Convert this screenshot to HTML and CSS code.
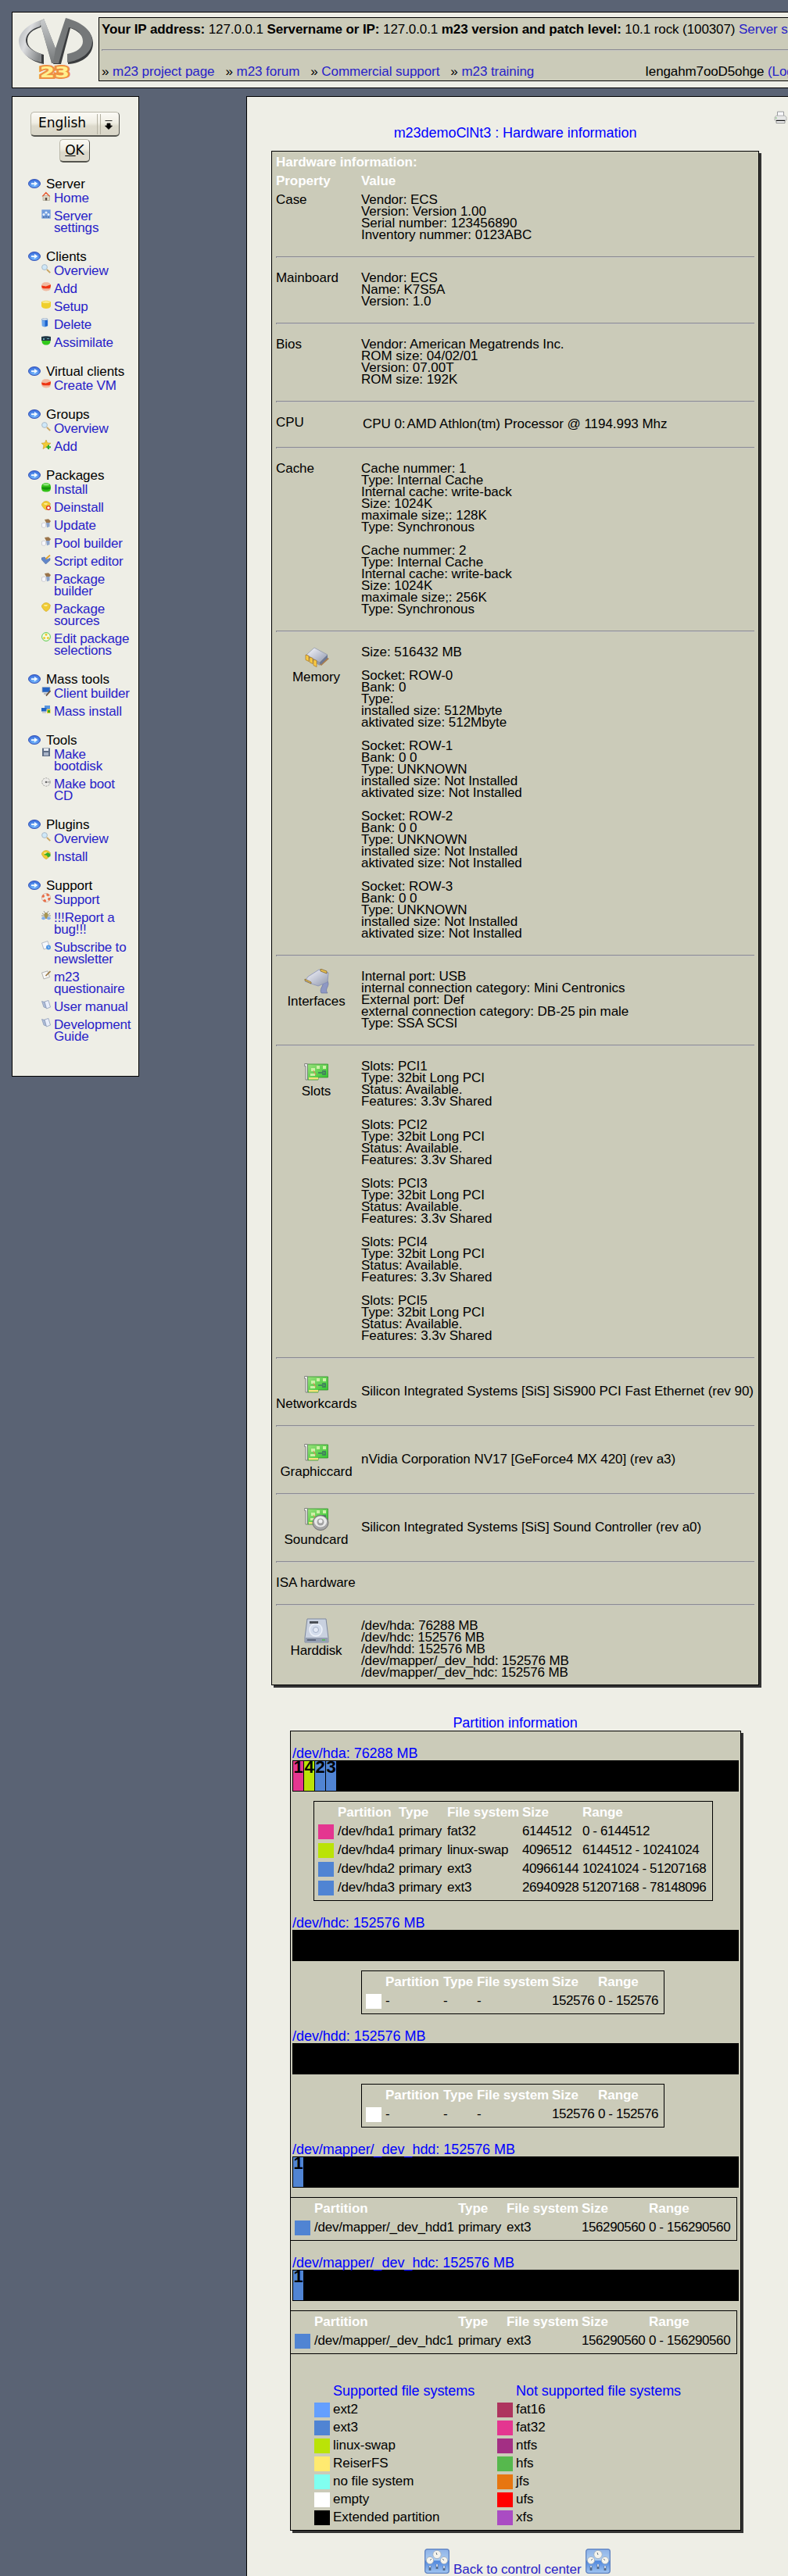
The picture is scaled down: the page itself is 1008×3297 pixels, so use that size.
FILE: index.html
```html
<!DOCTYPE html>
<html lang="en">
<head>
<meta charset="utf-8">
<title>m23 : Hardware information</title>
<link rel="stylesheet" href="styles.css">
</head>
<body>
<svg class="defs" aria-hidden="true">
  <defs>
    <linearGradient id="silver" x1="0" y1="0" x2="1" y2="0.6"><stop offset="0" stop-color="#a9adb0"/><stop offset="0.45" stop-color="#dcdddf"/><stop offset="1" stop-color="#85888a"/></linearGradient>
    <linearGradient id="steel" x1="0" y1="0" x2="0" y2="1"><stop offset="0" stop-color="#c9cccd"/><stop offset="1" stop-color="#777a7b"/></linearGradient>
    <radialGradient id="orb" cx="0.5" cy="0.7" r="0.7"><stop offset="0" stop-color="#7cc0ff"/><stop offset="1" stop-color="#3465d8"/></radialGradient>
    <linearGradient id="panel" x1="0" y1="0" x2="0" y2="1"><stop offset="0" stop-color="#8fb2e6"/><stop offset="0.45" stop-color="#a9ccf2"/><stop offset="0.5" stop-color="#4f86dc"/><stop offset="1" stop-color="#a4c8f2"/></linearGradient>
    <linearGradient id="metal" x1="0" y1="0" x2="1" y2="1"><stop offset="0" stop-color="#fafaff"/><stop offset="1" stop-color="#8f97ad"/></linearGradient>
    <linearGradient id="board" x1="0" y1="0" x2="1" y2="1"><stop offset="0" stop-color="#9ae07c"/><stop offset="1" stop-color="#2cc32a"/></linearGradient>
    <symbol id="i-arrow" viewBox="0 0 16 12"><ellipse cx="8" cy="6" rx="7.5" ry="5.5" fill="url(#orb)" stroke="#3a58b8"/><path d="M4 5.200h4V3L12.300 6 8 9V6.900H4z" fill="#f4faff"/></symbol>
    <symbol id="i-home" viewBox="0 0 12 12"><path d="M2 5.500h8.500v6H2z" fill="#ded8c6" stroke="#a09a88" stroke-width=".6"/><path d="M.5 6.200L5.800.600l5.500 5.600-1.300.4-4.200-3.800-4 3.700z" fill="#e8542a"/><path d="M4.800 8h2.400v3.500H4.800z" fill="#5c4c42"/></symbol>
    <symbol id="i-settings" viewBox="0 0 12 12"><rect x=".3" y=".3" width="11.400" height="11.400" rx="1" fill="#6f9bdc" stroke="#a8bfe4" stroke-width=".6"/><circle cx="6" cy="4" r="1.600" fill="#e6effa"/><circle cx="3" cy="6.500" r="1.500" fill="#e6effa"/><circle cx="9" cy="6.500" r="1.500" fill="#e6effa"/><path d="M3 9v2M6 8.500v2M9 9v2" stroke="#3e567e"/></symbol>
    <symbol id="i-search" viewBox="0 0 12 12"><circle cx="4" cy="4" r="3.400" fill="#cfe8f8" stroke="#a9b9c8"/><path d="M7 7l4.200 4.200" stroke="#c9a560" stroke-width="1.900"/></symbol>
    <symbol id="i-red" viewBox="0 0 12 12"><path d="M0 6C0 2 1.500.300 6 .300S12 2 12 6s-2 5.400-6 5.400S0 9.500 0 6z" fill="#f0b9a0"/><path d="M.2 4.500l5.500 1L12 3.200C12 7 11 8.200 9 8.200H3C1 8.200.2 7 .2 4.500z" fill="#ee3412"/></symbol>
    <symbol id="i-yellow" viewBox="0 0 12 12"><path d="M0 2.500C2 0 10 0 12 2.500V8c-1 4-11 4-12 0z" fill="#efcf2c"/><ellipse cx="6" cy="2.600" rx="5" ry="1.500" fill="#f9e988"/></symbol>
    <symbol id="i-bin" viewBox="0 0 12 12"><path d="M.3 1.300h7.900v8.800c-1 1.800-6.500 1.800-7.500 0z" fill="#6aa5ec"/><path d="M4.500 3h3.400v7l-3.400 1z" fill="#1f65cc"/><ellipse cx="4.200" cy="1.500" rx="3.800" ry="1.200" fill="#eaf2fb" stroke="#7e93b0" stroke-width=".6"/></symbol>
    <symbol id="i-borg" viewBox="0 0 12 12"><path d="M0 1c3-1 9-1 12 0v5H0z" fill="#213845"/><path d="M2 3h2v2H2zM7 3h3v1H7z" fill="#67aeb4"/><path d="M.5 6h11c0 4-2 5.500-5.500 5.500S.5 10 .5 6z" fill="#32c91c"/></symbol>
    <symbol id="i-star" viewBox="0 0 12 12"><path d="M6 0l1.600 3.800L12 4.200 8.800 7l1 4.600L6 9.200l-4 2.400 1-4.600L0 4.200l4.300-.4z" fill="#f3ca37" stroke="#bd8e1b" stroke-width=".5"/><path d="M8 6.500h2V8.300h2v2h-2V12H8v-1.700H6.400v-2H8z" fill="#2ba92b"/></symbol>
    <symbol id="i-green" viewBox="0 0 12 12"><path d="M0 6C0 1.500 2 .200 6 .200S12 1.500 12 6s-2 5.600-6 5.600S0 10.500 0 6z" fill="#32c118"/><path d="M.4 5.500h11.200c0 2-1 3.300-5.600 3.300S.4 7.500.4 5.500z" fill="#15930c"/><ellipse cx="6" cy="2.200" rx="4" ry="1.200" fill="#93e480"/></symbol>
    <symbol id="i-pack" viewBox="0 0 12 12"><path d="M1 3.200l2-2 3-.9 3 .9 2.400 2.200-.8 4-2 2.700L6 11.700 3.200 9.800 1.400 7.200 0 5z" fill="#f0cb35" stroke="#c99d1d" stroke-width=".5"/><path d="M3 3h5L7 5H4z" fill="#fbeb93"/></symbol>
    <symbol id="i-packout" viewBox="0 0 12 12"><use href="#i-pack"/><circle cx="9" cy="9" r="2.400" fill="#fff" stroke="#da2a1a" stroke-width="1.300"/></symbol>
    <symbol id="i-packin" viewBox="0 0 12 12"><use href="#i-pack"/><path d="M3 6l5-3 3.500 2v3L8 9.300 7 7z" fill="#36ad29"/></symbol>
    <symbol id="i-builder" viewBox="0 0 12 12"><path d="M4 1l5-.7L12 3l-1.500 2L6 5z" fill="#9a744a"/><path d="M.5 6l3-1 2 1v4l-2 1.500-3-1z" fill="#f8f8fb" stroke="#b8b8c2" stroke-width=".6"/><path d="M6 5h4.500v5L7 11.300z" fill="#8ba3ca"/></symbol>
    <symbol id="i-script" viewBox="0 0 12 12"><path d="M0 4l4-1 3 3 4-1.500V7l-5.500 5L0 6z" fill="#6287c9" stroke="#415e96" stroke-width=".5"/><path d="M5.500 5.500L11 .5" stroke="#e0a128" stroke-width="1.700"/></symbol>
    <symbol id="i-select" viewBox="0 0 12 12"><circle cx="6" cy="6" r="5.400" fill="#f5fbe4" stroke="#4bc63c" stroke-width=".9"/><circle cx="6" cy="3.300" r="1.500" fill="#edc92f"/><circle cx="3.600" cy="7.600" r="1.500" fill="#edc92f"/><circle cx="8.400" cy="7.600" r="1.500" fill="#edc92f"/></symbol>
    <symbol id="i-pc" viewBox="0 0 12 12"><path d="M1 .500h10v6.500H1z" fill="#2464c4" stroke="#a3afbf" stroke-width=".7"/><path d="M3 8h5v2H3z" fill="#b8bcc5"/><path d="M6 11.500L11.500 5" stroke="#69513c" stroke-width="1.800"/></symbol>
    <symbol id="i-mass" viewBox="0 0 12 12"><path d="M4 1h7v5H4z" fill="#5895de"/><path d="M0 4h6.500v4.500H0z" fill="#2265c5"/><path d="M1 9.500h5v1H1z" fill="#aab0bb"/><path d="M7 5.500h4.500v5.500H7z" fill="#edcb36"/><path d="M8 7h3v3H8z" fill="#35a824"/></symbol>
    <symbol id="i-floppy" viewBox="0 0 12 12"><path d="M1 .500h10v10.500H1z" fill="#5e6d85"/><path d="M3 1h6v3H3z" fill="#e7eaf0"/><path d="M3 6h6v4H3z" fill="#aab5c8"/></symbol>
    <symbol id="i-cd" viewBox="0 0 12 12"><path d="M.5 4.500C2 8 10 8 11.500 4.500L11 8c-1.500 4-8.500 4-10 0z" fill="#cfcfcc"/><circle cx="6" cy="6" r="5.200" fill="#ecebe8" stroke="#8a8a88" stroke-width=".8" stroke-dasharray="2 1.300"/><path d="M6 6l5-2v4z" fill="#b9b9b6"/><circle cx="6" cy="6" r="1.300" fill="#666"/></symbol>
    <symbol id="i-ring" viewBox="0 0 12 12"><circle cx="6" cy="6" r="4.200" fill="none" stroke="#eee9e3" stroke-width="3"/><circle cx="6" cy="6" r="4.200" fill="none" stroke="#ea6b43" stroke-width="3" stroke-dasharray="3.300 3.300"/><circle cx="6" cy="6" r="5.600" fill="none" stroke="#cf8d75" stroke-width=".5"/></symbol>
    <symbol id="i-bug" viewBox="0 0 12 12"><path d="M1 3l3 2M11 3L8 5M3 0l2 3M9 0L7 3M0 6h12" stroke="#6d6b62" stroke-width=".7"/><ellipse cx="6" cy="6" rx="2.300" ry="4" fill="#a8954f"/><ellipse cx="2.600" cy="9.300" rx="2.400" ry="2" fill="#87b0ea"/><ellipse cx="9.400" cy="9.300" rx="2.400" ry="2" fill="#87b0ea"/></symbol>
    <symbol id="i-mail" viewBox="0 0 12 12"><path d="M.5 3L8 .600l2.500 8L3 11z" fill="#f6f8fc" stroke="#98a2b3" stroke-width=".7"/><circle cx="9" cy="8.500" r="3" fill="#4f96e5"/><path d="M8 7l2 1v2z" fill="#d6eafc"/></symbol>
    <symbol id="i-note" viewBox="0 0 12 12"><path d="M.5 3L8 .800l2.500 7.700L3 11z" fill="#f7f7f6" stroke="#999" stroke-width=".7"/><path d="M5.500 7L11.500 1" stroke="#9b7843" stroke-width="1.700"/></symbol>
    <symbol id="i-book" viewBox="0 0 12 12"><path d="M.5 1.500l3.500 1L6 10 3 9z" fill="#aebdd8" stroke="#788bae" stroke-width=".6"/><path d="M4 2l5-1.500L11.500 9 6.500 11z" fill="#e9eefa" stroke="#8090b2" stroke-width=".7"/></symbol>
    <symbol id="i-memory" viewBox="0 0 32 32"><path d="M11 7L32 18l-10 9L3 14z" fill="#a87c4d"/><path d="M13 4l17 9-10 10L3 13z" fill="url(#metal)" stroke="#8b93a6" stroke-width=".7"/><path d="M3 13l17 10v4L3 16z" fill="#8f98ae"/><path d="M20 23l10-10v4l-9 9z" fill="#6d7994"/><path d="M2 13l4 1.500v7l-4-2zM7 16l4 1.500v7l-4-2zM12 19l4 1.500v8l-4-2z" fill="#f9cb45" stroke="#a8741a" stroke-width=".7"/></symbol>
    <symbol id="i-port" viewBox="0 0 32 32"><path d="M21 17c8 2-3 8 1 14h8c-5-6 5-9-1-17z" fill="#8e98c4" stroke="#69729e" stroke-width=".7"/><path d="M19 1l12 4-1 12-12 5L1 16 5 10z" fill="url(#metal)" stroke="#7e88b4" stroke-width=".7"/><path d="M21 0l8 3v3l-8-3zM1 13l8 4v2l-8-4z" fill="#e8bf4e" stroke="#725a2e" stroke-width=".7"/></symbol>
    <symbol id="i-card" viewBox="0 0 32 32"><path d="M4.500 7h26v17H18v3H4.500z" fill="url(#board)" stroke="#33902c" stroke-width=".8"/><path d="M6 24h12v2.500H6z" fill="#f5e27b"/><path d="M9 12h5v4H9zM16 9h4v4h-4zM24 9h4v4h-4zM8 19h6v3H8z" fill="#cdf0a7"/><path d="M18 18h7M23 16h4v4h-4" stroke="#3f7163" stroke-width="1.600" fill="none"/><path d="M12 15l3 6" stroke="#ef8055"/><path d="M.7 6.500h3.600V27H2V9.500H.7z" fill="#f2f2f0" stroke="#6b6b6b" stroke-width=".8"/></symbol>
    <symbol id="i-sound" viewBox="0 0 32 32"><use href="#i-card" y="-5"/><ellipse cx="21" cy="20" rx="10" ry="9.500" fill="#a5a5a5" stroke="#707070"/><ellipse cx="21" cy="18.500" rx="8" ry="7" fill="#e9e9e9"/><circle cx="21" cy="19" r="4.500" fill="#a1a1a1"/><circle cx="21" cy="18" r="2.500" fill="#eee"/></symbol>
    <symbol id="i-disk" viewBox="0 0 32 32"><path d="M4 1h24l3 24v6H1v-6z" fill="#c9d1df" stroke="#7e899e"/><path d="M1.500 25h29v5.500h-29z" fill="#939db0"/><circle cx="15" cy="15" r="8" fill="#d4ddec" stroke="#eff3fa" stroke-width="1.400"/><circle cx="15" cy="15" r="3.500" fill="#e4eaf5" stroke="#a5b1c8"/><path d="M7 4h11v3H7z" fill="#4b5058"/><path d="M4 27h11v2H4z" fill="#5b6578"/><path d="M23 27h4v2h-4z" fill="#5fb660"/></symbol>
    <symbol id="i-control" viewBox="0 0 32 32"><rect x=".7" y=".7" width="30.600" height="30.600" rx="3" fill="url(#panel)" stroke="#5d81c0" stroke-width="1.300"/><g fill="#f5f4ed" stroke="#9da9b9" stroke-width=".8"><circle cx="16" cy="7.500" r="5.200"/><circle cx="7" cy="15" r="4.600"/><circle cx="25" cy="15" r="4.600"/></g><path d="M16 8l-1-3M7 15l2-2M25 15l-2-2" stroke="#66737f" fill="none"/><path d="M7 22v6M16 20v6M25 22v6" stroke="#536b8d" stroke-width="2.800"/><path d="M7 22v2M16 20v3M25 22v3" stroke="#e8eaf0" stroke-width="1.600"/></symbol>
  </defs>
</svg>

<header class="topbar">
  <svg class="logo" viewBox="0 0 100 82">
    <path d="M34 6C16 9 3 20 4 32c1 15 14 25 30 28V48C20 44 13 38 13 30c0-9 7-14 17-17z" fill="#3a3c3e"/>
    <path d="M33 3C14 8 2 20 2 31c1 15 14 24 29 27V47C18 43 11 37 11 29c1-9 9-15 18-17z" fill="url(#silver)"/>
    <path d="M66 4C87 9 97 21 97 33c0 15-13 26-32 27V49c12-3 20-9 20-17 0-9-8-15-17-18L56 60H46z" fill="#3a3c3e"/>
    <path d="M29 6l5-4 15 38L62 1c20 5 34 16 34 29 0 16-15 25-32 28V47c12-2 20-8 20-16 0-10-8-16-18-18L53 59h-9z" fill="#757879"/>
    <path d="M29 6l5-4 15 38-3 18h-2z" fill="url(#steel)"/>
    <text x="29" y="77" class="logo-text" textLength="38" lengthAdjust="spacingAndGlyphs">23</text>
  </svg>
  <div class="info">
    <p class="info-line"><b>Your IP address:</b> 127.0.0.1 <b>Servername or IP:</b> 127.0.0.1 <b>m23 version and patch level:</b> 10.1 rock (100307) <a>Server settings</a></p>
    <hr>
    <div class="info-nav">
      <p>» <a>m23 project page</a> &nbsp; » <a>m23 forum</a> &nbsp; » <a>Commercial support</a> &nbsp; » <a>m23 training</a></p>
      <p class="login">Iengahm7ooD5ohge <a>(Logout)</a></p>
    </div>
  </div>
</header>

<div class="columns">
<nav class="sidebar">
  <div class="lang">
    <div class="select"><span>English</span><i class="grip"></i><svg width="10" height="12" viewBox="0 0 10 12"><path d="M.5.500h9M3 4h4v3h2.500L5 11.500.5 7H3z" fill="#000" stroke="#000" stroke-width=".8"/></svg></div>
    <div class="ok"><u>O</u>K</div>
  </div>
  <section><h2><svg><use href="#i-arrow"/></svg>Server</h2><ul>
    <li><svg><use href="#i-home"/></svg><a>Home</a></li>
    <li><svg><use href="#i-settings"/></svg><a>Server<br>settings</a></li></ul></section>
  <section><h2><svg><use href="#i-arrow"/></svg>Clients</h2><ul>
    <li><svg><use href="#i-search"/></svg><a>Overview</a></li>
    <li><svg><use href="#i-red"/></svg><a>Add</a></li>
    <li><svg><use href="#i-yellow"/></svg><a>Setup</a></li>
    <li><svg><use href="#i-bin"/></svg><a>Delete</a></li>
    <li><svg><use href="#i-borg"/></svg><a>Assimilate</a></li></ul></section>
  <section><h2><svg><use href="#i-arrow"/></svg>Virtual clients</h2><ul>
    <li><svg><use href="#i-red"/></svg><a>Create VM</a></li></ul></section>
  <section><h2><svg><use href="#i-arrow"/></svg>Groups</h2><ul>
    <li><svg><use href="#i-search"/></svg><a>Overview</a></li>
    <li><svg><use href="#i-star"/></svg><a>Add</a></li></ul></section>
  <section><h2><svg><use href="#i-arrow"/></svg>Packages</h2><ul>
    <li><svg><use href="#i-green"/></svg><a>Install</a></li>
    <li><svg><use href="#i-packout"/></svg><a>Deinstall</a></li>
    <li><svg><use href="#i-builder"/></svg><a>Update</a></li>
    <li><svg><use href="#i-builder"/></svg><a>Pool builder</a></li>
    <li><svg><use href="#i-script"/></svg><a>Script editor</a></li>
    <li><svg><use href="#i-builder"/></svg><a>Package<br>builder</a></li>
    <li><svg><use href="#i-pack"/></svg><a>Package<br>sources</a></li>
    <li><svg><use href="#i-select"/></svg><a>Edit package<br>selections</a></li></ul></section>
  <section><h2><svg><use href="#i-arrow"/></svg>Mass tools</h2><ul>
    <li><svg><use href="#i-pc"/></svg><a>Client builder</a></li>
    <li><svg><use href="#i-mass"/></svg><a>Mass install</a></li></ul></section>
  <section><h2><svg><use href="#i-arrow"/></svg>Tools</h2><ul>
    <li><svg><use href="#i-floppy"/></svg><a>Make<br>bootdisk</a></li>
    <li><svg><use href="#i-cd"/></svg><a>Make boot<br>CD</a></li></ul></section>
  <section><h2><svg><use href="#i-arrow"/></svg>Plugins</h2><ul>
    <li><svg><use href="#i-search"/></svg><a>Overview</a></li>
    <li><svg><use href="#i-packin"/></svg><a>Install</a></li></ul></section>
  <section><h2><svg><use href="#i-arrow"/></svg>Support</h2><ul>
    <li><svg><use href="#i-ring"/></svg><a>Support</a></li>
    <li><svg><use href="#i-bug"/></svg><a>!!!Report a<br>bug!!!</a></li>
    <li><svg><use href="#i-mail"/></svg><a>Subscribe to<br>newsletter</a></li>
    <li><svg><use href="#i-note"/></svg><a>m23<br>questionaire</a></li>
    <li><svg><use href="#i-book"/></svg><a>User manual</a></li>
    <li><svg><use href="#i-book"/></svg><a>Development<br>Guide</a></li></ul></section>
</nav>

<main class="content">
  <svg class="printer" viewBox="0 0 17 17"><path d="M4.500 1h8v7h-8z" fill="#f8f8fb" stroke="#9a9c9e"/><path d="M1 8l2-2h11l2 2v4H1z" fill="#e6e7e6" stroke="#a4a6a6" stroke-width=".8"/><path d="M3 12h11v3.500H3z" fill="#f5f5f5" stroke="#7c7e7e" stroke-width=".8"/><path d="M3 12.500h11" stroke="#111"/><path d="M2 9h1.500" stroke="#4caf3d"/></svg>
  <h1>m23demoClNt3 : Hardware information</h1>

  <div class="card hardware">
    <div class="caption">Hardware information:</div>
    <div class="row-head"><span>Property</span><span>Value</span></div>
    <div class="row first"><div>Case</div><div>Vendor: ECS<br>Version: Version 1.00<br>Serial number: 123456890<br>Inventory nummer: 0123ABC</div></div>
    <hr>
    <div class="row"><div>Mainboard</div><div>Vendor: ECS<br>Name: K7S5A<br>Version: 1.0</div></div>
    <hr>
    <div class="row"><div>Bios</div><div>Vendor: American Megatrends Inc.<br>ROM size: 04/02/01<br>Version: 07.00T<br>ROM size: 192K</div></div>
    <hr>
    <div class="row"><div>CPU</div><div class="cpu"><span>CPU 0:</span><span>AMD Athlon(tm) Processor @ 1194.993 Mhz</span></div></div>
    <hr>
    <div class="row"><div>Cache</div><div>Cache nummer: 1<br>Type: Internal Cache<br>Internal cache: write-back<br>Size: 1024K<br>maximale size;: 128K<br>Type: Synchronous<br><br>Cache nummer: 2<br>Type: Internal Cache<br>Internal cache: write-back<br>Size: 1024K<br>maximale size;: 256K<br>Type: Synchronous</div></div>
    <hr>
    <div class="row"><div class="device"><svg><use href="#i-memory"/></svg>Memory</div><div>Size: 516432 MB<br><br>Socket: ROW-0<br>Bank: 0<br>Type:<br>installed size: 512Mbyte<br>aktivated size: 512Mbyte<br><br>Socket: ROW-1<br>Bank: 0 0<br>Type: UNKNOWN<br>installed size: Not Installed<br>aktivated size: Not Installed<br><br>Socket: ROW-2<br>Bank: 0 0<br>Type: UNKNOWN<br>installed size: Not Installed<br>aktivated size: Not Installed<br><br>Socket: ROW-3<br>Bank: 0 0<br>Type: UNKNOWN<br>installed size: Not Installed<br>aktivated size: Not Installed</div></div>
    <hr>
    <div class="row"><div class="device"><svg><use href="#i-port"/></svg>Interfaces</div><div>Internal port: USB<br>internal connection category: Mini Centronics<br>External port: Def<br>external connection category: DB-25 pin male<br>Type: SSA SCSI</div></div>
    <hr>
    <div class="row"><div class="device"><svg><use href="#i-card"/></svg>Slots</div><div>Slots: PCI1<br>Type: 32bit Long PCI<br>Status: Available.<br>Features: 3.3v Shared<br><br>Slots: PCI2<br>Type: 32bit Long PCI<br>Status: Available.<br>Features: 3.3v Shared<br><br>Slots: PCI3<br>Type: 32bit Long PCI<br>Status: Available.<br>Features: 3.3v Shared<br><br>Slots: PCI4<br>Type: 32bit Long PCI<br>Status: Available.<br>Features: 3.3v Shared<br><br>Slots: PCI5<br>Type: 32bit Long PCI<br>Status: Available.<br>Features: 3.3v Shared</div></div>
    <hr>
    <div class="row middle"><div class="device"><svg><use href="#i-card"/></svg>Networkcards</div><div>Silicon Integrated Systems [SiS] SiS900 PCI Fast Ethernet (rev 90)</div></div>
    <hr>
    <div class="row middle"><div class="device"><svg><use href="#i-card"/></svg>Graphiccard</div><div>nVidia Corporation NV17 [GeForce4 MX 420] (rev a3)</div></div>
    <hr>
    <div class="row middle"><div class="device"><svg><use href="#i-sound"/></svg>Soundcard</div><div>Silicon Integrated Systems [SiS] Sound Controller (rev a0)</div></div>
    <hr>
    <div class="row"><div>ISA hardware</div><div></div></div>
    <hr>
    <div class="row last"><div class="device"><svg><use href="#i-disk"/></svg>Harddisk</div><div>/dev/hda: 76288 MB<br>/dev/hdc: 152576 MB<br>/dev/hdd: 152576 MB<br>/dev/mapper/_dev_hdd: 152576 MB<br>/dev/mapper/_dev_hdc: 152576 MB</div></div>
  </div>

  <h1 class="part-title">Partition information</h1>
  <div class="card partitions">
    <div class="drive">
      <h3>/dev/hda: 76288 MB</h3>
      <div class="bar"><b class="fat32">1</b><b class="swap">4</b><b class="ext3">2</b><b class="ext3">3</b></div>
      <div class="ptable cols-hda">
        <b></b><b>Partition</b><b>Type</b><b>File system</b><b>Size</b><b>Range</b>
        <i class="fat32"></i><span>/dev/hda1</span><span>primary</span><span>fat32</span><span>6144512</span><span>0 - 6144512</span>
        <i class="swap"></i><span>/dev/hda4</span><span>primary</span><span>linux-swap</span><span>4096512</span><span>6144512 - 10241024</span>
        <i class="ext3"></i><span>/dev/hda2</span><span>primary</span><span>ext3</span><span>40966144</span><span>10241024 - 51207168</span>
        <i class="ext3"></i><span>/dev/hda3</span><span>primary</span><span>ext3</span><span>26940928</span><span>51207168 - 78148096</span>
      </div>
    </div>
    <div class="drive">
      <h3>/dev/hdc: 152576 MB</h3>
      <div class="bar"></div>
      <div class="ptable cols-empty">
        <b></b><b>Partition</b><b>Type</b><b>File system</b><b>Size</b><b>Range</b>
        <i class="empty"></i><span>-</span><span>-</span><span>-</span><span>152576</span><span>0 - 152576</span>
      </div>
    </div>
    <div class="drive">
      <h3>/dev/hdd: 152576 MB</h3>
      <div class="bar"></div>
      <div class="ptable cols-empty">
        <b></b><b>Partition</b><b>Type</b><b>File system</b><b>Size</b><b>Range</b>
        <i class="empty"></i><span>-</span><span>-</span><span>-</span><span>152576</span><span>0 - 152576</span>
      </div>
    </div>
    <div class="drive">
      <h3>/dev/mapper/_dev_hdd: 152576 MB</h3>
      <div class="bar"><b class="ext3">1</b></div>
      <div class="ptable cols-mapper">
        <b></b><b>Partition</b><b>Type</b><b>File system</b><b>Size</b><b>Range</b>
        <i class="ext3"></i><span>/dev/mapper/_dev_hdd1</span><span>primary</span><span>ext3</span><span>156290560</span><span>0 - 156290560</span>
      </div>
    </div>
    <div class="drive">
      <h3>/dev/mapper/_dev_hdc: 152576 MB</h3>
      <div class="bar"><b class="ext3">1</b></div>
      <div class="ptable cols-mapper">
        <b></b><b>Partition</b><b>Type</b><b>File system</b><b>Size</b><b>Range</b>
        <i class="ext3"></i><span>/dev/mapper/_dev_hdc1</span><span>primary</span><span>ext3</span><span>156290560</span><span>0 - 156290560</span>
      </div>
    </div>
    <div class="legend">
      <b></b><h3>Supported file systems</h3><b></b><h3>Not supported file systems</h3>
      <i class="ext2"></i><span>ext2</span><i class="fat16"></i><span>fat16</span>
      <i class="ext3"></i><span>ext3</span><i class="fat32"></i><span>fat32</span>
      <i class="swap"></i><span>linux-swap</span><i class="ntfs"></i><span>ntfs</span>
      <i class="reiser"></i><span>ReiserFS</span><i class="hfs"></i><span>hfs</span>
      <i class="nofs"></i><span>no file system</span><i class="jfs"></i><span>jfs</span>
      <i class="empty"></i><span>empty</span><i class="ufs"></i><span>ufs</span>
      <i class="extended"></i><span>Extended partition</span><i class="xfs"></i><span>xfs</span>
    </div>
  </div>
  <div class="back"><svg><use href="#i-control"/></svg><a>Back to control center</a><svg><use href="#i-control"/></svg></div>
</main>
</div>
</body>
</html>
```
FILE: styles.css
```css
* { box-sizing: border-box; }
html { background: #5a6374; overflow: hidden; }
body {
  margin: 0;
  height: 3297px;
  padding: 15px 0 0 15px;
  overflow: hidden;
  background: #5a6374;
  color: #000;
  font: 17px/15px "Liberation Sans", Arial, sans-serif;
  letter-spacing: -0.04px;
}
h1, h2, h3, p, ul { margin: 0; padding: 0; font-weight: normal; }
ul { list-style: none; }
a { color: #2822c8; }
.defs { display: block; width: 0; height: 0; position: absolute; }
hr { height: 2px; margin: 0; border: 0; border-top: 1px solid #8b8b93; border-left: 1px solid #8b8b93; background: #c6c6c2; }

/* top bar */
.topbar {
  display: flex;
  height: 98px;
  padding: 6px 0 0 6px;
  border: 1px solid #000;
  border-right: 0;
  background: #eeeee6;
}
.logo { width: 100px; height: 82px; flex: none; }
.logo-text {
  font: bold 19px "DejaVu Sans", sans-serif;
  fill: #ffef8e;
  stroke: #ee8f42;
  stroke-width: 4px;
  paint-order: stroke;
}
.info {
  flex: 1;
  min-width: 0;
  height: 82px;
  margin-left: 4px;
  padding: 7px 0 0 3px;
  overflow: hidden;
  border: 1px solid #000;
  border-right: 0;
  background: #cbcbb9;
  white-space: nowrap;
}
.info-line { letter-spacing: -0.09px; }
.info hr { margin: 18px 0 19px; }
.info-nav { display: flex; letter-spacing: -0.06px; }
.login { margin-left: 142px; letter-spacing: -0.12px; }

.columns { display: flex; align-items: flex-start; margin-top: 10px; }

/* sidebar */
.sidebar {
  flex: none;
  width: 163px;
  height: 1255px;
  padding-top: 19px;
  border: 1px solid #000;
  background: #eeeee6;
  white-space: nowrap;
}
.lang { display: flex; flex-direction: column; gap: 3px; padding-left: 23px; height: 85px; font: 17px/20px "DejaVu Sans", sans-serif; }
.select {
  display: flex;
  align-items: center;
  width: 114px;
  height: 32px;
  padding: 0 0 3px 9px;
  border: 1px solid #b9b7a8;
  border-right-color: #55554f;
  border-bottom: 2px solid #55554f;
  border-radius: 5px;
  background: linear-gradient(#fbfaf5, #f0eee4 45%, #dddacc 60%, #d9d6c8);
}
.grip { width: 5px; height: 26px; margin: 3px 5px 0 14px; border: solid #b4b1a2; border-width: 0 1px; }
.select svg { flex: none; margin-top: 5px; }
.ok {
  width: 39px;
  height: 30px;
  margin-left: 37px;
  padding-top: 3px;
  border: 1px solid #b9b7a8;
  border-right-color: #55554f;
  border-bottom: 2px solid #55554f;
  border-radius: 5px;
  background: linear-gradient(#fbfaf5, #efede2 45%, #dbd8ca 60%, #dedbce);
  text-align: center;
}
.sidebar section { margin-bottom: 14px; }
.sidebar h2 { display: flex; height: 18px; padding-left: 20px; font-size: 17px; line-height: 15px; }
.sidebar h2 svg { width: 16px; height: 12px; margin: 1px 7px 0 0; }
.sidebar li { display: flex; padding: 0 0 8px 37px; letter-spacing: -0.17px; }
.sidebar li svg { width: 12px; height: 12px; margin: -1px 4px 0 0; flex: none; }

/* main column */
.content {
  flex: 1;
  min-width: 0;
  height: 3300px;
  margin-left: 137px;
  padding: 18px 0 0 31px;
  border: 1px solid #000;
  border-right: 0;
  background: #eeeee6;
}
.printer { display: block; width: 17px; height: 17px; margin-left: 643px; }
h1 { width: 624px; color: #0000ff; font-size: 18px; line-height: 20px; text-align: center; }
.content > h1:first-of-type { margin: 1px 0 13px; }
.card { border: 1px solid #000; background: #cbcbb9; box-shadow: 3px 3px 0 #333; white-space: nowrap; }
.hardware { width: 624px; padding: 6px 5px 8px; }
.caption, .row-head { height: 24px; color: #fff; font-weight: bold; }
.row-head, .row { display: grid; grid-template-columns: 109px 1fr; }
.row { padding: 18px 0 20px; }
.row.first { padding-top: 0; }
.row.last { padding-bottom: 0; letter-spacing: -0.15px; }
.row.middle > :last-child { align-self: center; }
.device { width: 103px; text-align: center; }
.device svg { display: block; width: 32px; height: 32px; margin: -2px 0 2px 36px; }
.cpu { display: flex; gap: 2px; padding: 2px; }

/* partitions */
.content > h1.part-title { height: 20px; margin: 38px 0 0; }
.partitions { width: 577px; height: 1024px; margin-left: 24px; padding: 20px 2px 0; }
h3 { color: #0000ff; font-size: 18px; line-height: 17px; }
.drive { margin-bottom: 20px; }
.bar { display: flex; gap: 1px; height: 40px; padding: 1px; background: #000; }
.bar b { width: 13px; font-size: 22px; line-height: 16px; text-align: center; }
.ptable { display: grid; grid-auto-rows: 24px; margin-top: 12px; padding: 6px 0 0 5px; border: 1px solid #000; }
.ptable b { color: #fff; }
.ptable span { letter-spacing: -0.22px; }
.ptable span:nth-child(6n+5), .ptable span:nth-child(6n) { letter-spacing: -0.42px; }
.ptable i, .legend i { width: 20px; height: 19px; margin-top: -1px; }
.cols-hda { width: 511px; height: 128px; margin-left: 27px; grid-template-columns: 25px 78px 62px 96px 77px auto; }
.cols-empty { width: 388px; height: 56px; margin-left: 88px; grid-template-columns: 25px 74px 43px 96px 59px auto; }
.cols-mapper { width: 572px; height: 56px; margin-left: -3px; grid-template-columns: 25px 184px 62px 96px 86px auto; }
.legend { display: grid; grid-template-columns: 24px 210px 24px auto; grid-auto-rows: 23px; padding-left: 28px; }
.legend h3 { line-height: 15px; }
.partitions .drive:nth-last-child(2) { margin-bottom: 40px; }

.ext2 { background: #649fff; }
.ext3 { background: #5084d3; }
.swap { background: #bae307; }
.reiser { background: #ffea70; }
.nofs { background: #80fff0; }
.empty { background: #fff; }
.extended { background: #000; }
.fat16 { background: #ae345e; }
.fat32 { background: #e43690; }
.ntfs { background: #a32f84; }
.hfs { background: #56b84d; }
.jfs { background: #e77610; }
.ufs { background: #ff0000; }
.xfs { background: #aa4cc3; }

.back { display: flex; width: 240px; margin: 23px 0 0 196px; gap: 5px; align-items: flex-start; white-space: nowrap; }
.back svg { width: 32px; height: 32px; flex: none; }
.back a { padding-top: 19px; }
```
